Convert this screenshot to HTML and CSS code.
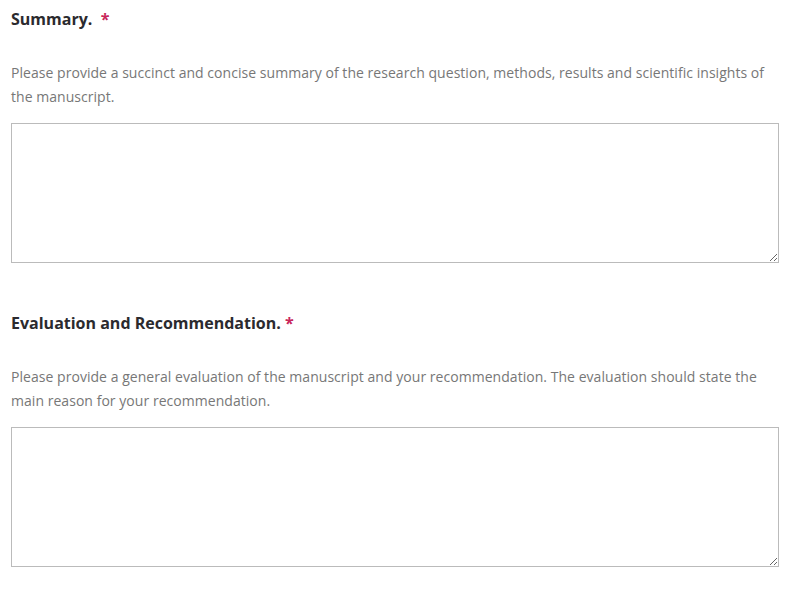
FILE: index.html
```html
<!DOCTYPE html>
<html lang="en">
<head>
<meta charset="utf-8">
<title>Review form</title>
<link rel="stylesheet" href="styles.css">
</head>
<body>
<form class="form">
  <div class="field">
    <label class="label" for="summary">Summary.&nbsp; <span class="req">*</span></label>
    <p class="desc">Please provide a succinct and concise summary of the research question, methods, results and scientific insights of the manuscript.</p>
    <textarea id="summary" class="input"></textarea>
  </div>
  <div class="field">
    <label class="label" for="evaluation">Evaluation and Recommendation. <span class="req">*</span></label>
    <p class="desc">Please provide a general evaluation of the manuscript and your recommendation. The evaluation should state the main reason for your recommendation.</p>
    <textarea id="evaluation" class="input"></textarea>
  </div>
</form>
</body>
</html>
```
FILE: styles.css
```css
html, body {
  margin: 0;
  padding: 0;
  background: #fff;
}
body {
  font-family: "Open Sans", "Liberation Sans", sans-serif;
  color: #333;
}
.form {
  padding: 7px 8px 0 11px;
  display: flex;
  flex-direction: column;
  gap: 48px;
}
.field {
  display: flex;
  flex-direction: column;
}
.label {
  display: block;
  font-size: 16px;
  font-weight: 700;
  line-height: 24px;
  color: #2b2a2e;
}
.req {
  color: #c8265a;
}
.desc {
  margin: 30px 0 14px;
  font-size: 14px;
  line-height: 24px;
  letter-spacing: 0.04px;
  color: #777;
}
.input {
  display: block;
  box-sizing: border-box;
  width: 768px;
  height: 140px;
  margin: 0;
  border: 1px solid #bbb;
  background: #fff;
  resize: vertical;
  font-family: inherit;
}
```
